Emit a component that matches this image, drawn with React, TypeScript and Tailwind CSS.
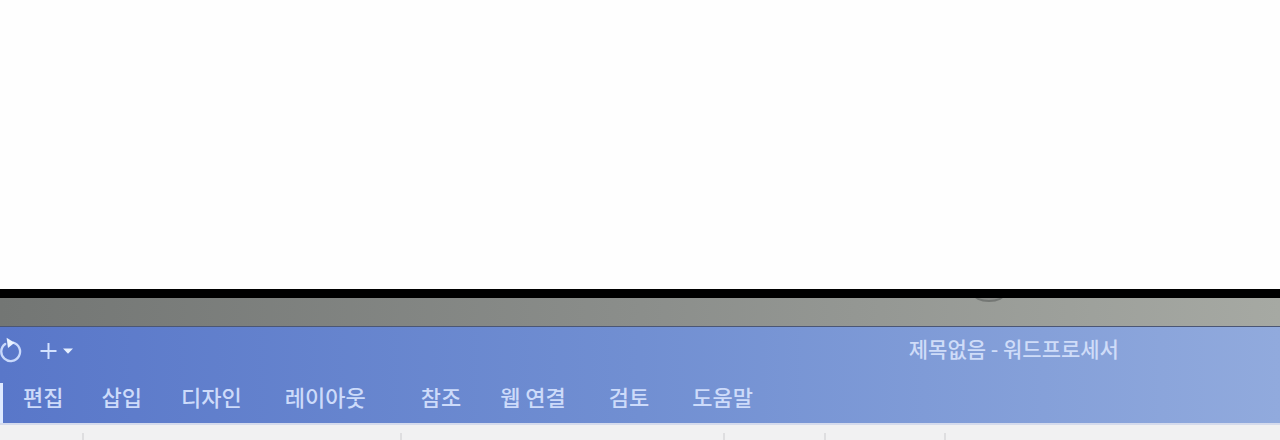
import React from 'react';

interface MenuItem {
  label: string;
  spacing: string;
}

interface RibbonGroup {
  id: string;
  size: string;
}

const MENU_ITEMS: MenuItem[] = [
  { label: '편집', spacing: 'mr-[38px]' },
  { label: '삽입', spacing: 'mr-[39px]' },
  { label: '디자인', spacing: 'mr-[43px]' },
  { label: '레이아웃', spacing: 'mr-[55px]' },
  { label: '참조', spacing: 'mr-[39px]' },
  { label: '웹 연결', spacing: 'mr-[43px]' },
  { label: '검토', spacing: 'mr-[43px]' },
  { label: '도움말', spacing: '' },
];

const RIBBON_GROUPS: RibbonGroup[] = [
  { id: 'clipboard', size: 'w-[84px]' },
  { id: 'font', size: 'w-[318px]' },
  { id: 'paragraph', size: 'w-[323px]' },
  { id: 'styles', size: 'w-[101px]' },
  { id: 'editing', size: 'w-[120px]' },
];

const RedoIcon: React.FC = () => (
  <svg width="24" height="28" viewBox="0 0 24 28" fill="none" aria-hidden="true">
    <path
      d="M13.2 5.6A9.4 9.4 0 1 1 5.2 7"
      stroke="#c9d9fb"
      strokeWidth="2.3"
      strokeLinecap="round"
    />
    <path d="M6.6 0.8L14.6 5.8L8 11Z" fill="#e9f2ff" />
  </svg>
);

const AddIcon: React.FC = () => (
  <svg width="34" height="20" viewBox="0 0 34 20" aria-hidden="true">
    <path d="M0.5 10H16.5M8.5 2V18" stroke="#d3e2ff" strokeWidth="2" />
    <path d="M23 7.5H33L28 12.8Z" fill="#e6f0ff" />
  </svg>
);

// Monitor frame above the application window
const Bezel: React.FC = () => (
  <div className="relative h-[38px] shrink-0 overflow-hidden border-t-[9px] border-b border-t-black border-b-[#4b5674] bg-linear-to-r from-[#737674] via-[#8b8e8b] to-[#a6a9a3]">
    <div className="absolute -top-3 left-[77.3%] h-4 w-8 -translate-x-1/2 rounded-[50%] border-2 border-[#747774] bg-[#8d8f8c]" />
  </div>
);

const TitleBar: React.FC = () => (
  <div className="flex h-12 items-center">
    <div className="flex w-[71%] items-center gap-4">
      <button type="button" aria-label="다시 실행" className="shrink-0">
        <RedoIcon />
      </button>
      <button type="button" aria-label="빠른 실행 도구 추가" className="shrink-0">
        <AddIcon />
      </button>
    </div>
    <h1 className="pb-1.5 text-[21px] leading-6 font-medium whitespace-nowrap text-[#cfdcf8]">
      제목없음 - 워드프로세서
    </h1>
  </div>
);

const MenuBar: React.FC = () => (
  <nav className="flex h-12 items-stretch pt-2">
    <div className="mr-5 w-[3px] shrink-0 bg-[#dfeaff]" />
    {MENU_ITEMS.map((item) => (
      <button
        key={item.label}
        type="button"
        className={`shrink-0 pb-3.5 text-[22px] leading-6 font-medium whitespace-nowrap text-[#cddbfa] ${item.spacing}`}
      >
        {item.label}
      </button>
    ))}
  </nav>
);

const Ribbon: React.FC = () => (
  <div className="flex flex-1 border-t-2 border-[#d5dbec] bg-[#f1f1f2] pt-2">
    {RIBBON_GROUPS.map((group) => (
      <div key={group.id} className={`shrink-0 border-r-2 border-[#dedee0] ${group.size}`} />
    ))}
  </div>
);

export const App: React.FC = () => {
  return (
    <div className="flex min-h-screen flex-col overflow-hidden bg-[#fefefe] font-['Noto_Sans_CJK_KR',sans-serif]">
      <div className="h-[289px] shrink-0" />
      <Bezel />
      <header className="bg-linear-to-r from-[#5977c9] via-[#718fd2] to-[#91aadd]">
        <TitleBar />
        <MenuBar />
      </header>
      <Ribbon />
    </div>
  );
};

export default App;
